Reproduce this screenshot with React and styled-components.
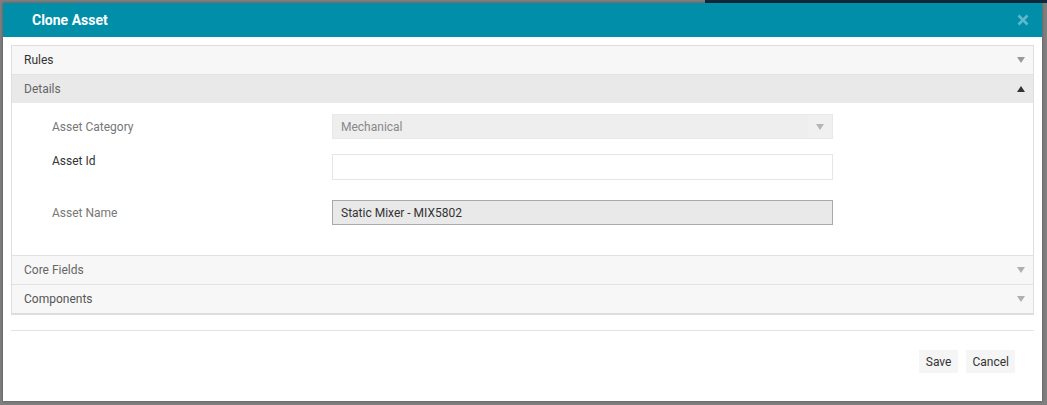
import styled, { createGlobalStyle } from "styled-components";

const GlobalStyle = createGlobalStyle`
  html, body {
    margin: 0;
    padding: 0;
    height: 100%;
  }
  body {
    font-family: Roboto, "Liberation Sans", sans-serif;
    font-size: 12px;
    background: #7f7f7f;
    overflow: hidden;
  }
`;

// dimmed page behind the dialog
const Backdrop = styled.div`
  position: fixed;
  inset: 0;
  background: linear-gradient(to right, #7f7f7f 0 705px, #0f2a3b 705px) top / 100% 3px no-repeat,
    #7f7f7f;
`;

const Modal = styled.div`
  position: fixed;
  left: 3px;
  top: 3px;
  width: 1039px;
  height: 398px;
  background: #fff;
  box-shadow: 0 0 3px rgba(0, 0, 0, 0.35);
  display: flex;
  flex-direction: column;
`;

const Header = styled.div`
  height: 34px;
  background: #008ea9;
  display: flex;
  align-items: center;
  justify-content: space-between;
  padding: 0 13px 0 29px;
`;

const Title = styled.h2`
  margin: 0;
  color: #fff;
  font-size: 14px;
  font-weight: 700;
`;

const Close = styled.button`
  border: 0;
  background: none;
  padding: 0;
  width: 12px;
  height: 12px;
  display: flex;
  cursor: pointer;
`;

const Body = styled.div`
  padding: 8px 8px 0;
`;

const Panel = styled.div`
  border: 1px solid #dedede;
  border-bottom-width: 2px;
`;

const SectionHead = styled.div`
  height: 28px;
  display: flex;
  align-items: center;
  justify-content: space-between;
  padding: 0 8px 0 12px;
  background: ${(p) => (p.$open ? "#e9e9e9" : "#f7f7f7")};
  color: ${(p) => p.$color || "#666"};
  border-top: ${(p) => (p.$first ? "0" : "1px solid #e2e2e2")};
`;

const Caret = styled.span`
  width: 0;
  height: 0;
  border-left: 4.5px solid transparent;
  border-right: 4.5px solid transparent;
  ${(p) =>
    p.$up
      ? `border-bottom: 6px solid ${p.$color};`
      : `border-top: 6px solid ${p.$color};`}
`;

const SectionBody = styled.div`
  padding: 11px 0 30px 40px;
  background: #fff;
`;

const FieldRow = styled.div`
  display: grid;
  grid-template-columns: 280px 501px;
  align-items: ${(p) => (p.$top ? "start" : "center")};
  margin-bottom: ${(p) => p.$mb || 0}px;
`;

const Label = styled.label`
  color: ${(p) => (p.$strong ? "#333" : "#777")};
`;

const SelectBox = styled.div`
  height: 25px;
  box-sizing: border-box;
  border: 1px solid #e8e8e8;
  background: #eeeeee;
  display: flex;
  align-items: center;
  color: #888;
`;

const SelectText = styled.span`
  flex: 1;
  padding-left: 8px;
`;

const SelectArrow = styled.span`
  width: 24px;
  height: 100%;
  display: flex;
  align-items: center;
  justify-content: center;
  background: #f0f0f0;
`;

const Input = styled.input`
  height: ${(p) => p.$h || 25}px;
  box-sizing: border-box;
  width: 100%;
  margin: 0;
  padding: 0 8px;
  font: inherit;
  color: #333;
  border: 1px solid ${(p) => (p.readOnly ? "#a9a9a9" : "#e6e6e6")};
  background: ${(p) => (p.readOnly ? "#e9e9e9" : "#fff")};
  outline: none;
`;

const Divider = styled.hr`
  margin: 15px 0 0;
  border: 0;
  border-top: 1px solid #e3e3e3;
`;

const Footer = styled.div`
  display: flex;
  justify-content: flex-end;
  gap: 8px;
  padding: 19px 19px 0 0;
`;

const Button = styled.button`
  height: 23px;
  padding: 0 ${(p) => p.$px || 7}px;
  border: 0;
  background: #f5f5f5;
  color: #333;
  font: inherit;
  cursor: pointer;
`;

function Section({ title, open, first, color, caret, children }) {
  return (
    <>
      <SectionHead $open={open} $first={first} $color={color}>
        <span>{title}</span>
        <Caret $up={open} $color={caret} />
      </SectionHead>
      {open && children}
    </>
  );
}

export default function App() {
  return (
    <>
      <GlobalStyle />
      <Backdrop />
      <Modal>
        <Header>
          <Title>Clone Asset</Title>
          <Close aria-label="close">
            <svg width="12" height="12" viewBox="0 0 12 12">
              <path d="M1.5 1.5l9 9M10.5 1.5l-9 9" stroke="#5fb9cb" strokeWidth="2.6" />
            </svg>
          </Close>
        </Header>
        <Body>
          <Panel>
            <Section title="Rules" first color="#333" caret="#999" />
            <Section title="Details" open color="#666" caret="#333">
              <SectionBody>
                <FieldRow $mb={15}>
                  <Label>Asset Category</Label>
                  <SelectBox>
                    <SelectText>Mechanical</SelectText>
                    <SelectArrow>
                      <Caret $color="#b5b5b5" />
                    </SelectArrow>
                  </SelectBox>
                </FieldRow>
                <FieldRow $mb={20} $top>
                  <Label $strong>Asset Id</Label>
                  <Input $h={26} />
                </FieldRow>
                <FieldRow>
                  <Label>Asset Name</Label>
                  <Input readOnly value="Static Mixer - MIX5802" />
                </FieldRow>
              </SectionBody>
            </Section>
            <Section title="Core Fields" color="#666" caret="#b0b0b0" />
            <Section title="Components" color="#555" caret="#b0b0b0" />
          </Panel>
          <Divider />
          <Footer>
            <Button>Save</Button>
            <Button $px={6}>Cancel</Button>
          </Footer>
        </Body>
      </Modal>
    </>
  );
}
